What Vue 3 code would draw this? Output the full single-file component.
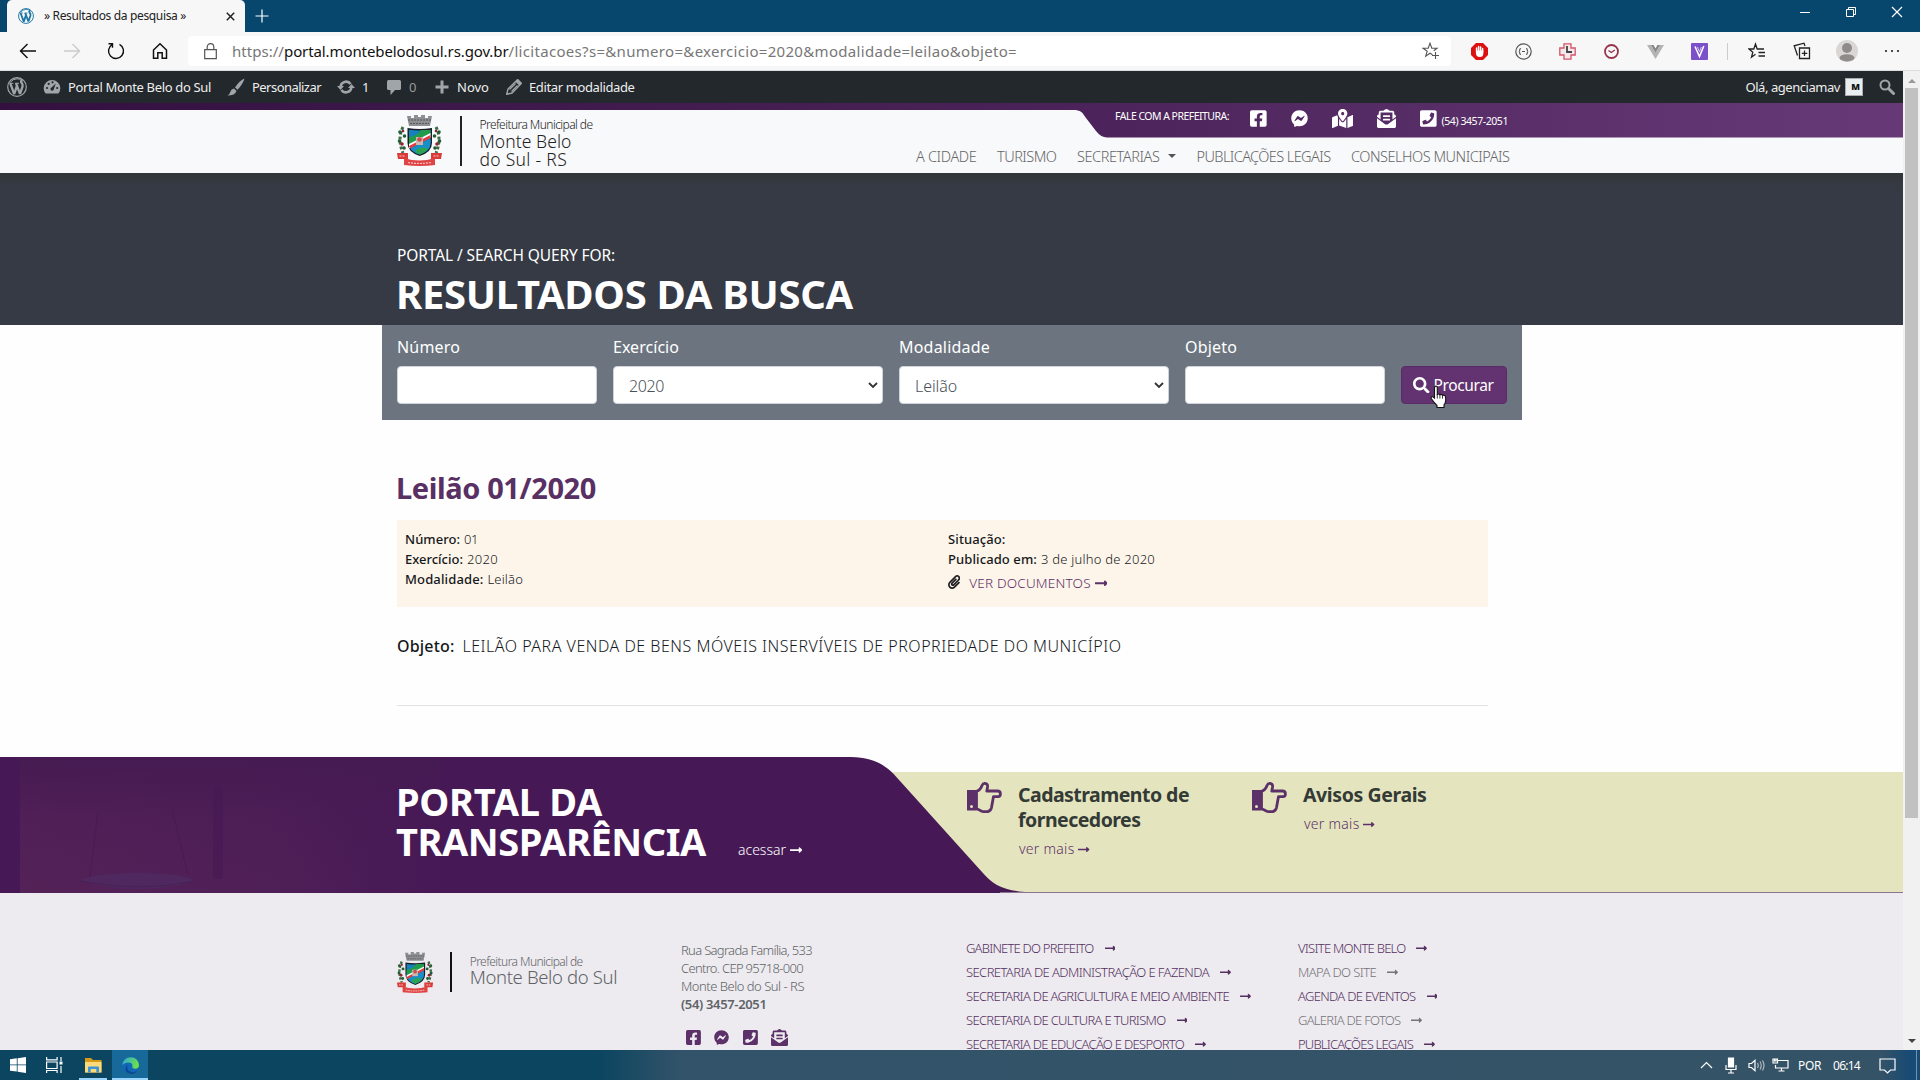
<script setup>
import { h } from 'vue'

// Tracks text so that its run takes the given width
const vFit = {
  mounted(el, { value }) {
    const range = document.createRange()
    range.selectNodeContents(el)
    const natural = range.getBoundingClientRect().width
    const count = el.textContent.trim().length
    if (count > 0) el.style.letterSpacing = ((value - natural) / count).toFixed(3) + 'px'
  },
}

const icons = {
  facebook: [448, 'M400 32H48A48 48 0 0 0 0 80v352a48 48 0 0 0 48 48h137.25V327.69h-63V256h63v-54.64c0-62.15 37-96.48 93.67-96.48 27.14 0 55.52 4.84 55.52 4.84v61h-31.27c-30.81 0-40.42 19.12-40.42 38.73V256h68.78l-11 71.69h-57.78V480H400a48 48 0 0 0 48-48V80a48 48 0 0 0-48-48z'],
  messenger: [512, 'M256.55 8C116.52 8 8 110.34 8 248.57c0 72.3 29.71 134.78 78.07 177.94 8.35 7.51 6.63 11.86 8.05 58.23A19.92 19.92 0 0 0 122 502.31c52.91-23.3 53.59-25.14 62.56-22.7C337.85 521.8 504 423.7 504 248.57 504 110.34 396.59 8 256.55 8zm149.24 185.13l-73 115.57a37.37 37.37 0 0 1-53.91 9.93l-58.08-43.47a15 15 0 0 0-18 0l-78.37 59.44c-10.46 7.93-24.16-4.6-17.11-15.67l73-115.57a37.36 37.36 0 0 1 53.91-9.93l58.06 43.46a15 15 0 0 0 18 0l78.41-59.38c10.44-7.98 24.14 4.54 17.09 15.62z'],
  map: [576, 'M288 0c-69.59 0-126 56.41-126 126 0 56.26 82.35 158.8 113.9 196.02 6.39 7.54 17.82 7.54 24.2 0C331.65 284.8 414 182.26 414 126 414 56.41 357.59 0 288 0zm0 168c-23.2 0-42-18.8-42-42s18.8-42 42-42 42 18.8 42 42-18.8 42-42 42zM20.12 215.95A32.006 32.006 0 0 0 0 245.66v250.32c0 11.32 11.43 19.06 21.94 14.86L160 448V214.92c-8.84-15.98-16.07-31.54-21.25-46.42L20.12 215.95zM288 359.67c-14.07 0-27.38-6.18-36.51-16.96-19.66-23.2-40.57-49.62-59.49-76.72v182l192 64V266c-18.92 27.09-39.82 53.52-59.49 76.72-9.13 10.77-22.44 16.95-36.51 16.95zm266.06-198.51L416 224v288l139.88-55.95A31.996 31.996 0 0 0 576 426.34V176.02c0-11.32-11.43-19.06-21.94-14.86z'],
  mail: [512, 'M176 216h160c8.84 0 16-7.16 16-16v-16c0-8.84-7.16-16-16-16H176c-8.84 0-16 7.16-16 16v16c0 8.84 7.16 16 16 16zm-16 80c0 8.84 7.16 16 16 16h160c8.84 0 16-7.16 16-16v-16c0-8.84-7.16-16-16-16H176c-8.84 0-16 7.16-16 16v16zm96 121.13c-16.42 0-32.84-5.06-46.86-15.19L0 250.86V464c0 26.51 21.49 48 48 48h416c26.51 0 48-21.49 48-48V250.86L302.86 401.94c-14.02 10.12-30.44 15.19-46.86 15.19zm237.61-254.18c-8.85-6.94-17.24-13.47-29.61-22.81V96c0-26.51-21.49-48-48-48h-77.55c-3.04-2.2-5.87-4.26-9.04-6.56C312.6 29.17 279.2-.35 256 0c-23.2-.35-56.59 29.17-73.41 41.44-3.17 2.3-6 4.36-9.04 6.56H96c-26.51 0-48 21.49-48 48v44.14c-12.37 9.33-20.76 15.87-29.61 22.81A47.995 47.995 0 0 0 0 200.72v10.65l96 69.35V96h320v184.72l96-69.35v-10.65c0-14.74-6.78-28.67-18.39-37.77z'],
  phone: [448, 'M400 32H48C21.49 32 0 53.49 0 80v352c0 26.51 21.49 48 48 48h352c26.51 0 48-21.49 48-48V80c0-26.51-21.49-48-48-48zM94 416c-7.033 0-13.057-4.873-14.616-11.627l-14.998-65a15 15 0 0 1 8.707-17.16l69.998-29.999a15 15 0 0 1 17.518 4.289l30.997 37.885c48.944-22.963 88.297-62.858 110.781-110.78l-37.886-30.997a15.001 15.001 0 0 1-4.289-17.518l30-69.998a15 15 0 0 1 17.16-8.707l65 14.998A14.997 14.997 0 0 1 384 126c0 160.292-129.945 290-290 290z'],
  search: [512, 'M505 442.7L405.3 343c-4.5-4.5-10.6-7-17-7H372c27.6-35.3 44-79.7 44-128C416 93.1 322.9 0 208 0S0 93.1 0 208s93.1 208 208 208c48.3 0 92.7-16.4 128-44v16.3c0 6.4 2.5 12.5 7 17l99.7 99.7c9.4 9.4 24.6 9.4 33.9 0l28.3-28.3c9.4-9.4 9.4-24.6.1-34zM208 336c-70.7 0-128-57.2-128-128 0-70.7 57.2-128 128-128 70.7 0 128 57.2 128 128 0 70.7-57.2 128-128 128z'],
  clip: [448, 'M43.246 466.142c-58.43-60.289-57.341-157.511 1.386-217.581L254.392 34c44.316-45.332 116.351-45.336 160.671 0 43.89 44.894 43.943 117.329 0 162.276L232.214 383.128c-29.855 30.537-78.633 30.111-107.982-.998-28.275-29.97-27.368-77.473 1.452-106.953l143.743-146.835c6.182-6.314 16.312-6.422 22.626-.241l22.861 22.379c6.315 6.182 6.422 16.312.241 22.626L171.427 319.927c-4.932 5.045-5.236 13.428-.648 18.292 4.372 4.634 11.245 4.711 15.688.165l182.849-186.851c19.613-20.062 19.613-52.725-.011-72.798-19.189-19.627-49.957-19.637-69.154 0L90.39 293.295c-34.763 35.56-35.299 93.12-1.191 128.313 34.01 35.093 88.985 35.137 123.058.286l172.06-175.999c6.177-6.319 16.307-6.433 22.626-.256l22.877 22.364c6.319 6.177 6.434 16.307.256 22.626l-172.06 175.998c-59.576 60.938-155.943 60.216-214.77-.485z'],
  arrow: [448, 'M320 224H12c-7 0-12 5-12 12v40c0 7 5 12 12 12h308v44c0 22 26 32 41 17l80-76c9-9 9-25 0-34l-80-76c-15-15-41-4-41 17z'],
}

const Icon = ({ name, size }) =>
  h('svg', { viewBox: `0 0 ${icons[name][0]} 512`, height: size, width: (size * icons[name][0]) / 512, fill: 'currentColor', class: 'ic' }, [h('path', { d: icons[name][1] })])
Icon.props = ['name', 'size']

const WpLogo = ({ size }) =>
  h('svg', { viewBox: '0 0 20 20', width: size, height: size, class: 'ic' }, [
    h('circle', { cx: 10, cy: 10, r: 9.3, fill: 'none', stroke: 'currentColor', 'stroke-width': 1.2 }),
    h('path', { fill: 'none', stroke: 'currentColor', 'stroke-width': 2.3, 'stroke-linejoin': 'bevel', d: 'M3.2 6.2 7.2 17 10.2 8.2' }),
    h('path', { fill: 'none', stroke: 'currentColor', 'stroke-width': 2.3, 'stroke-linejoin': 'bevel', d: 'M9 6.2 13 16.8 15.6 9.4Q16 7.6 14.6 5.8T15.2 3.2' }),
    h('path', { fill: 'none', stroke: 'currentColor', 'stroke-width': 1, d: 'M2.6 6.3H6.3M8 6.3H12M3.2 5.4Q6 1.8 10 1.8T15.4 3.6' }),
  ])
WpLogo.props = ['size']

const Crest = ({ height }) =>
  h('svg', { viewBox: '0 0 45 51', height, width: (height * 45) / 51, class: 'ic', innerHTML: `
    <path d="M10 1h4v2h3V0h4v2h3V0h4v3h3V1h4l-2 10H12z" fill="#8d8f92"/>
    <path d="M11 5h24M13 8.500h19" stroke="#55585b" stroke-width="1" stroke-dasharray="2 1"/>
    <path d="M6 12q-6 12 0 26M39 12q6 12 0 26" stroke="#3e6b43" stroke-width="3" fill="none" stroke-dasharray="3 2"/>
    <g fill="#235b36"><circle cx="3" cy="17" r="1.800"/><circle cx="7.500" cy="21" r="1.800"/><circle cx="2.500" cy="26" r="1.800"/><circle cx="7" cy="33" r="1.800"/><circle cx="42" cy="17" r="1.800"/><circle cx="37.500" cy="21" r="1.800"/><circle cx="42.500" cy="26" r="1.800"/><circle cx="38" cy="33" r="1.800"/></g>
    <g fill="#8c2634"><circle cx="5" cy="29" r="1.800"/><circle cx="40" cy="29" r="1.800"/><circle cx="6" cy="16" r="1.300"/><circle cx="39" cy="16" r="1.300"/></g>
    <path d="M0 38h11v6H1zM34 38h11l-1 6H34z" fill="#d93a3a"/>
    <path d="M7 43q15 5 31 0v7q-15 2-31 0z" fill="#e04444"/>
    <path d="M2.500 41h6M36.500 41h6M11 47.500q11 2 23 0" stroke="#f6c9c4" stroke-width="1.200" stroke-dasharray="2 1" fill="none"/>
    <path d="M10.500 13q12 2 24.500 0v15q0 9-12.250 13Q10.500 37 10.500 28z" fill="#191f24"/>
    <path d="M12 14.800q10.500 1.500 21.500 0V28q0 8-10.750 11.500Q12 36 12 28z" fill="#1681bd"/>
    <path d="M12 22q8-1 12-7h9.500v7L12 31z" fill="#239b4c"/>
    <path d="M12 29 33.500 18v4.500L12 33.500z" fill="#fff"/>
    <path d="M12 31 33.500 20v3L13 33.500z" fill="#e23b3c"/>
    <path d="M13.500 33.500 33.500 24v4q0 8-10.750 11.500Q16 37.500 13.500 33.500z" fill="#1a8fc7"/>
    <path d="M18 36q6-6 13-2-3 4-8.250 5.500Q20 38.500 18 36z" fill="#2aa450"/>
    <path d="M19 22h7v8h-7z" fill="#c9b9b2"/><circle cx="22.500" cy="24.500" r="2.300" fill="#d34a4b"/>` })
Crest.props = ['height']

const exts = ['adblock', 'json', 'cross', 'check', 'vue', 'vuetify']
const menu = [['A CIDADE', 60.5], ['TURISMO', 59.5], ['SECRETARIAS', 82.5], ['PUBLICAÇÕES LEGAIS', 134], ['CONSELHOS MUNICIPAIS', 158.5]]
const offices = [['GABINETE DO PREFEITO', 127.5], ['SECRETARIA DE ADMINISTRAÇÃO E FAZENDA', 243], ['SECRETARIA DE AGRICULTURA E MEIO AMBIENTE', 263], ['SECRETARIA DE CULTURA E TURISMO', 199.5], ['SECRETARIA DE EDUCAÇÃO E DESPORTO', 218]]
const links = [['VISITE MONTE BELO', 107.5], ['MAPA DO SITE', 78, true], ['AGENDA DE EVENTOS', 117.5], ['GALERIA DE FOTOS', 102.5, true], ['PUBLICAÇÕES LEGAIS', 115]]
const address = [['Rua Sagrada Família, 533', 131], ['Centro. CEP 95718-000', 122], ['Monte Belo do Sul - RS', 123]]
</script>

<template>
  <div class="screen">
    <!-- Browser window frame -->
    <div class="titlebar">
      <div class="tab">
        <span class="fav"><WpLogo :size="16" /></span>
        <span class="tabname" v-fit="142">» Resultados da pesquisa »</span>
        <svg width="9" height="9" viewBox="0 0 9 9" stroke="#222" stroke-width="1.500"><path d="M.8.8l7.400 7.400M8.200.8.800 8.200" /></svg>
      </div>
      <svg class="newtab" width="14" height="14" viewBox="0 0 14 14" stroke="#fff" stroke-width="1.200"><path d="M7 .500v13M.500 7h13" /></svg>
      <div class="winbtns">
        <svg width="12" height="12" viewBox="0 0 12 12" stroke="#fff" fill="none"><path d="M1 6.500h10" /></svg>
        <svg width="12" height="12" viewBox="0 0 12 12" stroke="#fff" fill="none"><path d="M1.500 3.500h7v7h-7zM3.500 3.500v-2h7v7h-2" /></svg>
        <svg width="12" height="12" viewBox="0 0 12 12" stroke="#fff" fill="none" stroke-width="1.200"><path d="M1 1l10 10M11 1 1 11" /></svg>
      </div>
    </div>
    <div class="toolbar">
      <div class="navs">
        <svg width="18" height="18" viewBox="0 0 18 18"><path d="M17 9H1.500M8.500 2l-7 7 7 7" /></svg>
        <svg width="18" height="18" viewBox="0 0 18 18" class="off"><path d="M1 9h15.500M9.500 2l7 7-7 7" /></svg>
        <svg width="18" height="18" viewBox="0 0 18 18"><path d="M12.500 2.300a7.500 7.500 0 1 1-7.500.3M1.500 1.700h4v4" /></svg>
        <svg width="18" height="18" viewBox="0 0 18 18"><path d="M2.500 16.300V8L9 1.800 15.500 8v8.300h-4.300v-5.600H6.800v5.600z" stroke-width="1.500" /></svg>
      </div>
      <div class="address">
        <svg width="13" height="17" viewBox="0 0 13 17" fill="none" stroke="#555" stroke-width="1.200"><path d="M.7 6.700h11.600v9H.7zM3.200 6.700V4a3.300 3.300 0 0 1 6.600 0v2.700" /></svg>
        <span class="url"><span v-fit="52">https://</span><b v-fit="224.500">portal.montebelodosul.rs.gov.br</b><span v-fit="508.500">/licitacoes?s=&amp;numero=&amp;exercicio=2020&amp;modalidade=leilao&amp;objeto=</span></span>
        <svg width="18" height="18" viewBox="0 0 18 18" fill="none" stroke="#555" stroke-width="1.100"><path d="M10.500 12.700 8 11.200l-4.300 3 1.500-5L1 6.200h5.200L8 1.200l1.800 5H15l-3.300 2.500M13.500 10v7M10 13.500h7" /></svg>
      </div>
      <div class="exts">
        <span v-for="e in exts" :key="e" class="cell">
          <svg v-if="e === 'adblock'" width="17" height="17" viewBox="0 0 17 17"><path d="M5 0h7l5 5v7l-5 5H5l-5-5V5z" fill="#dc1010" /><path d="M5.600 9V5M7.600 8V3.500M9.600 8V4M11.600 9V5.500" stroke="#fff" stroke-width="1.500" stroke-linecap="round" /><path d="M4.900 7.500h7.400v3q0 3.500-3.500 3.500t-3.900-3.500z" fill="#fff" /></svg>
          <svg v-else-if="e === 'json'" width="17" height="17" viewBox="0 0 17 17" fill="none" stroke="#555" stroke-width="1.200"><circle cx="8.500" cy="8.500" r="7.700" /><path d="M6 5.500q-1.300 0-1.300 1.500T3.800 8.500q.9 0 .9 1.500T6 11.500M11 5.500q1.300 0 1.300 1.500t.9 1.500q-.9 0-.9 1.500T11 11.500M7 8.500h3" /></svg>
          <svg v-else-if="e === 'cross'" width="17" height="17" viewBox="0 0 17 17"><path d="M5 .8h7V5h4.200v7H12v4.200H5V12H.8V5H5z" fill="#f4e9ec" stroke="#d55468" stroke-width="1.300" /><path d="M8 3v6h5" stroke="#444" stroke-width="1.800" fill="none" /></svg>
          <svg v-else-if="e === 'check'" width="17" height="17" viewBox="0 0 17 17" fill="none" stroke="#96344e" stroke-width="1.800"><circle cx="8.500" cy="8.500" r="6.500" /><path d="M5.500 7.500 8.300 9.500l3.500-2.500" stroke-width="1.400" /></svg>
          <svg v-else-if="e === 'vue'" width="17" height="17" viewBox="0 0 17 17"><path d="M0 2h4l4.500 7.500L13 2h4L8.500 16z" fill="#b3b3b3" /><path d="M4 2h2.500l2 3.500 2-3.500H13L8.500 9.500z" fill="#858585" /></svg>
          <svg v-else width="17" height="17" viewBox="0 0 17 17"><rect width="17" height="17" rx="1" fill="#7b50c8" /><path d="M4 3.500l4.500 10L12.800 3" fill="none" stroke="#fff" stroke-width="1.500" /><path d="M6.500 4l2 5 1.800-5" fill="none" stroke="#d5c4f3" /></svg>
        </span>
      </div>
      <div class="sep"></div>
      <div class="tools">
        <span class="cell"><svg width="18" height="18" viewBox="0 0 18 18" fill="none" stroke="#222" stroke-width="1.300"><path d="M7.500 12.300l-4 2.900 1.300-5L1 7h4.800l1.700-5 1.700 5H16M10.500 10.500H17M10.500 14H17" /></svg></span>
        <span class="cell"><svg width="18" height="18" viewBox="0 0 18 18" fill="none" stroke="#222" stroke-width="1.300"><path d="M6.500 6h10v10.500h-10zM11.500 8.500V14M8.800 11.300h5.500M4.500 13.500 1.200 3.800 11 1.200 12 4" /></svg></span>
        <span class="cell"><svg width="22" height="22" viewBox="0 0 22 22"><circle cx="11" cy="11" r="11" fill="#d9d6d4" /><circle cx="11" cy="8" r="5" fill="#8e8b8a" /><ellipse cx="11" cy="17.800" rx="7.500" ry="3.600" fill="#8e8b8a" /></svg></span>
        <span class="cell"><svg width="16" height="4" viewBox="0 0 16 4" fill="#222"><circle cx="2" cy="2" r="1.100" /><circle cx="8" cy="2" r="1.100" /><circle cx="14" cy="2" r="1.100" /></svg></span>
      </div>
    </div>

    <div class="viewport">
      <div class="page">
        <div class="adminbar">
          <span class="a-wp"><WpLogo :size="20" /></span>
          <span class="a-item dash"><svg width="18" height="18" viewBox="0 0 18 18"><path d="M2.500 15.500a8.300 8.300 0 1 1 13 0z" fill="currentColor" /><g fill="#23282d"><circle cx="4" cy="10" r="1.100" /><circle cx="5.700" cy="5.900" r="1.100" /><circle cx="9.500" cy="4.300" r="1.100" /><circle cx="14.200" cy="10" r="1.100" /><path d="M12.800 5.500 10.500 12a1.700 1.700 0 0 1-3-1.500z" /></g></svg><b v-fit="143">Portal Monte Belo do Sul</b></span>
          <span class="a-item brush"><svg width="18" height="18" viewBox="0 0 18 18" fill="currentColor"><path d="M17.500.5Q13 2 8 9.500l2.500 2.300Q16 6 17.500.500zM7 10.500 9.500 13Q8 17.500.500 17.500 3 16 3.500 13.500T7 10.500z" /></svg><b v-fit="69">Personalizar</b></span>
          <span class="a-item sync"><svg width="18" height="16" viewBox="0 0 18 16" fill="none" stroke="currentColor" stroke-width="2.600"><path d="M3.600 8a5.500 5.500 0 0 1 10-3M14.400 8a5.500 5.500 0 0 1-10 3" /><path d="M0 7h7L3.500 11zM18 9h-7l3.500-4z" fill="currentColor" stroke="none" /></svg><b v-fit="7">1</b></span>
          <span class="a-item talk"><svg width="14" height="15" viewBox="0 0 14 15" fill="currentColor"><path d="M1.500 0h11Q14 0 14 1.500v7Q14 10 12.500 10H8l-4.500 5v-5h-2Q0 10 0 8.500v-7Q0 0 1.500 0z" /></svg><b v-fit="7">0</b></span>
          <span class="a-item plus"><svg width="14" height="14" viewBox="0 0 14 14" stroke="currentColor" stroke-width="3"><path d="M7 .500v13M.500 7h13" /></svg><b v-fit="32">Novo</b></span>
          <span class="a-item pen"><svg width="16" height="16" viewBox="0 0 16 16"><path d="M11.500.700l3.800 3.800L6 14 .7 15.300 2 10z" fill="none" stroke="currentColor" stroke-width="1.400" /><path d="M12 1l3 3-1.700 1.700-3-3zM3.500 10.500l6-6M5.500 12.500l6-6" fill="currentColor" stroke="currentColor" stroke-width="1.300" /></svg><b v-fit="105.500">Editar modalidade</b></span>
          <span class="a-user"><b v-fit="94.500">Olá, agenciamav</b><i class="ava">M</i><svg width="16" height="16" viewBox="0 0 16 16" fill="none" stroke="#a0a5aa"><circle cx="6" cy="6" r="4.500" stroke-width="2" /><path d="M9.500 9.500l5 5" stroke-width="3" stroke-linecap="round" /></svg></span>
        </div>

        <header class="header">
          <svg class="headshape" width="830" height="35" viewBox="0 0 830 35"><path d="M0 7C8 7 9 9 13 15L23 28Q28 34.500 34 34.500H830V0H0z" fill="url(#hg)" /><defs><linearGradient id="hg"><stop offset="0" stop-color="#4b235a" /><stop offset="1" stop-color="#673a77" /></linearGradient></defs></svg>
          <div class="brand">
            <Crest :height="51" />
            <div class="rule"></div>
            <div class="names"><small v-fit="113">Prefeitura Municipal de</small><span v-fit="92">Monte Belo</span><span v-fit="87.500">do Sul - RS</span></div>
          </div>
          <div class="headright">
            <div class="contact">
              <b class="fale" v-fit="114">FALE COM A PREFEITURA:</b>
              <Icon name="facebook" :size="19" class="c1" /><Icon name="messenger" :size="17" class="c2" /><Icon name="map" :size="19" class="c3" /><Icon name="mail" :size="19" class="c4" /><Icon name="phone" :size="19" class="c5" />
              <b class="tel" v-fit="66.500">(54) 3457-2051</b>
            </div>
            <nav class="menu"><span v-for="(m, i) in menu" :key="m[0]" class="mi"><span v-fit="m[1]">{{ m[0] }}</span><i v-if="i === 2" class="caret"></i></span></nav>
          </div>
        </header>

        <section class="hero">
          <div class="crumb"><span v-fit="218">PORTAL / SEARCH QUERY FOR:</span></div>
          <h1><span v-fit="457">RESULTADOS DA BUSCA</span></h1>
        </section>

        <form class="search">
          <label class="f1"><span v-fit="63">Número</span><input /></label>
          <label class="f2"><span v-fit="66">Exercício</span><div class="sel"><span v-fit="35">2020</span><svg width="10" height="7" viewBox="0 0 10 7"><path d="M1 1l4 4 4-4" /></svg></div></label>
          <label class="f2"><span v-fit="91">Modalidade</span><div class="sel"><span v-fit="42">Leilão</span><svg width="10" height="7" viewBox="0 0 10 7"><path d="M1 1l4 4 4-4" /></svg></div></label>
          <label class="f1"><span v-fit="52">Objeto</span><input /></label>
          <button type="button"><Icon name="search" :size="16.500" /><span v-fit="60">Procurar</span>
            <svg class="cursor" width="18" height="24" viewBox="0 0 18 24"><path d="M5 1.500q1.800-1 2.300 1V9.500q1.600-1.200 2.600.3 1.700-1 2.600.6 2.200-.8 2.900 1.200.5 1.400.3 4-.2 2.500-1.700 4.200V22.500H7V20.500Q4 17.500 1.200 13.500q-.5-2 1.500-1.800l1.800 1.500V2.300z" fill="#fff" stroke="#111" stroke-width="1.100" /><path d="M7.300 9.500v4M9.900 10v3.500M12.500 10.700v3" stroke="#111" stroke-width=".8" /></svg>
          </button>
        </form>

        <main class="result">
          <h2><span v-fit="200">Leilão 01/2020</span></h2>
          <div class="box">
            <div class="col"><p><b v-fit="55">Número:</b><span v-fit="14">01</span></p><p><b v-fit="58">Exercício:</b><span v-fit="31">2020</span></p><p><b v-fit="78.500">Modalidade:</b><span v-fit="35.500">Leilão</span></p></div>
            <div class="col"><p><b v-fit="57.500">Situação:</b></p><p><b v-fit="89">Publicado em:</b><span v-fit="114">3 de julho de 2020</span></p><p class="docs"><Icon name="clip" :size="14" /><span v-fit="121.500">VER DOCUMENTOS</span><Icon name="arrow" :size="14.500" /></p></div>
          </div>
          <p class="objeto"><b v-fit="57.500">Objeto:</b><span v-fit="659">LEILÃO PARA VENDA DE BENS MÓVEIS INSERVÍVEIS DE PROPRIEDADE DO MUNICÍPIO</span></p>
          <hr />
        </main>

        <section class="band">
          <svg class="bandbg" width="1903" height="136" viewBox="0 0 1903 136">
            <defs>
              <linearGradient id="tx"><stop offset="0" stop-color="#542257" /><stop offset=".6" stop-color="#4f1f57" /><stop offset="1" stop-color="#461956" /></linearGradient>
              <linearGradient id="tv" x2="0" y2="1"><stop offset="0" stop-color="#461a52" /><stop offset=".45" stop-color="#461a54" stop-opacity=".3" /><stop offset="1" stop-color="#461a54" stop-opacity="0" /></linearGradient>
            </defs>
            <path d="M860 15H1903V135H860z" fill="#e4e5bf" />
            <path d="M0 0H845C872 0 884 5 900 24L982 115C996 131 1006 135 1045 136H0z" fill="#461956" />
            <path d="M20 0h420v136H20z" fill="url(#tx)" /><path d="M20 0h420v136H20z" fill="url(#tv)" />
            <path d="M80 124q57 16 115 0-10-8-58-8t-57 8z" fill="#4d2a62" opacity=".8" /><path d="M80 124q57 12 115 0M90 120l8-66M188 118l-16-66" fill="none" stroke="#3e184d" opacity=".5" />
            <path d="M213 30h10v92h-10z" fill="#431753" opacity=".5" />
            <path d="M1000 135.500h903" stroke="#8c7590" />
          </svg>
          <div class="transp"><h3><span v-fit="206">PORTAL DA</span><span v-fit="310">TRANSPARÊNCIA</span></h3><div class="go"><span v-fit="48">acessar</span><Icon name="arrow" :size="14" /></div></div>
          <div v-for="n in 2" :key="n" class="card">
            <svg width="35" height="31" viewBox="0 0 35 31"><path d="M9.500 9.300Q13.500 8 15 3.500 16 1.300 18 1.400q2.800.3 2.600 3.300L19.800 9H31q2.400.3 2.400 2.900T31 14.600h-4.500l-2 10.900q-.8 3.500-3.500 4-5 .8-8-1.200l-3.500-1.500z" fill="none" stroke="#5c3068" stroke-width="2.800" stroke-linejoin="round" /><path d="M0 8h9.500v20.500H0z" fill="#5c3068" /><circle cx="4.500" cy="24.500" r="1.500" fill="#e4e5bf" /></svg>
            <div class="txt"><h4 v-if="n === 1"><span v-fit="171">Cadastramento de</span><span v-fit="122.500">fornecedores</span></h4><h4 v-else><span v-fit="123.500">Avisos Gerais</span></h4><div class="go"><span v-fit="55.500">ver mais</span><Icon name="arrow" :size="13" /></div></div>
          </div>
        </section>

        <footer class="footer">
          <div class="fbrand"><Crest :height="41" /><div class="rule"></div><div class="names"><small v-fit="113">Prefeitura Municipal de</small><span v-fit="147.500">Monte Belo do Sul</span></div></div>
          <div class="faddr"><p v-for="a in address" :key="a[0]" v-fit="a[1]">{{ a[0] }}</p><p><b v-fit="85.500">(54) 3457-2051</b></p><div class="soc"><Icon name="facebook" :size="17" /><Icon name="messenger" :size="15" /><Icon name="phone" :size="17" /><Icon name="mail" :size="17" /></div></div>
          <ul class="l1"><li v-for="o in offices" :key="o[0]"><span v-fit="o[1]">{{ o[0] }}</span><Icon name="arrow" :size="12.500" /></li></ul>
          <ul><li v-for="l in links" :key="l[0]" :class="{ dim: l[2] }"><span v-fit="l[1]">{{ l[0] }}</span><Icon name="arrow" :size="12.500" /></li></ul>
        </footer>
      </div>
      <div class="scroll"><i class="up"></i><div class="thumb"></div><i class="down"></i></div>
    </div>

    <!-- Desktop taskbar -->
    <div class="taskbar">
      <span class="tb"><svg width="16" height="16" viewBox="0 0 16 16" fill="#fff"><path d="M0 2.300 6.800 1.300V7.500H0zM7.600 1.200 16 0v7.500H7.600zM0 8.300h6.800v6.300L0 13.700zM7.600 8.300H16V16L7.600 14.800z" /></svg></span>
      <span class="tb"><svg width="17" height="16" viewBox="0 0 17 16" fill="none" stroke="#fff" stroke-width="1.200"><path d="M.600 0v2.800h10.500V0M.600 5h10.500v6.500H.600zM.600 16v-2.500h10.500V16M15 0v4M15 9v7" /><path d="M13.500 4.500h3v3h-3z" fill="#fff" stroke="none" /></svg></span>
      <span class="tb open"><svg width="17" height="15" viewBox="0 0 17 15"><path d="M0 0h6l2 2h8.500v12.500H0z" fill="#d99a18" /><path d="M0 4h16.500v10.500H0z" fill="#fbdb79" /><path d="M3 14.500V9.500q0-1 1-1h9q1 0 1 1v5h-2.700V11H5.700v3.500z" fill="#3d94d6" /></svg></span>
      <span class="tb open on"><svg width="17" height="17" viewBox="0 0 17 17"><defs><linearGradient id="eg" x2="1" y2=".4"><stop offset="0" stop-color="#2aa5dc" /><stop offset="1" stop-color="#6be04d" /></linearGradient></defs><circle cx="8.500" cy="8.500" r="8.300" fill="#1267b8" /><path d="M.3 8Q1.500.2 8.700.2T17 8q0 3.700-3.700 3.700-3 0-3-1.700.8-3.500-2.300-4.200Q3.500 4.500.300 8z" fill="url(#eg)" /><path d="M6 7.500q-2.500 5.500 3.500 7.500 3 .7 6-1.500-2.500 4-7.500 3.300-5-1-4.500-5.500Q4 8.500 6 7.500z" fill="#0b4a91" /></svg></span>
      <div class="tray">
        <svg width="13" height="8" viewBox="0 0 13 8"><path d="M1 7l5.500-5.500L12 7" /></svg>
        <svg width="12" height="17" viewBox="0 0 12 17"><path d="M3.500 1h5v9h-5z" fill="#fff" /><path d="M1 8v4.500h10V8M6 12.500V16M3 16h6" /></svg>
        <svg width="17" height="13" viewBox="0 0 17 13"><path d="M1 4.500h2.500L7 1.300v10.400L3.500 8.500H1z" /><path d="M9.500 4q1.500 2.500 0 5M12 2.500q2.500 4 0 8M14.500 1.500q3 5 0 10" opacity=".6" /></svg>
        <svg width="17" height="14" viewBox="0 0 17 14"><path d="M5 2.500h11v7.500H3.500V7M9.500 10v3M6.500 13h6M1 1h4.500v4H1zM2.500 1v2h1.500V1" /></svg>
        <span class="por" v-fit="23">POR</span>
        <span class="clock" v-fit="27">06:14</span>
        <svg width="17" height="17" viewBox="0 0 17 17"><path d="M1 2h15v11h-4.500l-3 3-3-3H1z" /></svg>
        <i class="peek"></i>
      </div>
    </div>
  </div>
</template>

<style>
body { margin: 0; overflow: hidden; }
.ic { display: block; flex: none; }
</style>

<style scoped>
.screen { width: 1920px; height: 1080px; overflow: hidden; display: flex; flex-direction: column; font-family: "Noto Sans", "Open Sans", sans-serif; font-weight: 300; color: #15181b; white-space: nowrap; }
.screen * { box-sizing: border-box; }
p, h1, h2, h3, h4, ul { margin: 0; padding: 0; list-style: none; }
i { font-style: normal; }
svg { display: block; flex: none; }
.titlebar { height: 32px; background: #07476d; display: flex; align-items: center; flex: none; }
.tab { margin-left: 7px; width: 238px; height: 32px; background: #f7f7f7; border-radius: 5px 5px 0 0; display: flex; align-items: center; padding: 0 10px 0 11px; }
.fav { color: #1b76a5; margin-right: 10px; }
.tabname { font-size: 12px; font-weight: 400; margin-right: auto; color: #222; margin-top: -1px; }
.newtab { margin-left: 10px; }
.winbtns { margin-left: auto; display: flex; gap: 34px; padding: 0 17px 9px 0; }
.toolbar { height: 39px; background: #f7f7f7; display: flex; align-items: center; flex: none; border-bottom: 1px solid #ddd; }
.navs { display: flex; gap: 26px; padding-left: 19px; width: 188px; }
.navs svg { fill: none; stroke: #111; stroke-width: 1.4; }
.navs .off { stroke: #ccc; }
.address { width: 1263px; height: 30px; background: #fff; border-radius: 4px; display: flex; align-items: center; padding: 0 11px 0 16px; }
.url { flex: 1; margin-left: 15px; display: flex; font-size: 15px; font-weight: 400; color: #777; }
.url b { font-weight: 400; color: #111; }
.exts { display: flex; margin-left: 6px; }
.cell { width: 44px; display: flex; justify-content: center; align-items: center; }
.sep { width: 1px; height: 17px; background: #ccc; margin: 0 7px 0 6px; }
.tools { display: flex; gap: 1px; }
.viewport { flex: 1; display: flex; min-height: 0; }
.page { width: 1903px; height: 979px; overflow: hidden; background: #fefefe; display: flex; flex-direction: column; }
.page > * { flex: none; }
.scroll { width: 17px; background: #f1f1f1; display: flex; flex-direction: column; align-items: center; padding: 8px 0 7px; }
.up, .down { border: 4px solid transparent; border-top: 0; border-bottom: 4px solid #999; }
.down { border-bottom: 0; border-top: 4px solid #444; margin-top: auto; }
.thumb { width: 13px; height: 730px; background: #c1c1c1; margin-top: 5px; }

.adminbar { height: 32px; background: #23282d; color: #a0a5aa; display: flex; align-items: center; padding-left: 7px; }
.adminbar b { font-size: 13px; font-weight: 400; color: #eee; }
.a-item { display: flex; align-items: center; gap: 7px; }
.a-wp { width: 36px; }
.dash { width: 184px; }
.brush { width: 110px; }
.sync { width: 50px; }
.talk { width: 48px; gap: 8px; }
.adminbar .talk b { color: #999; }
.plus { width: 71px; gap: 8px; }
.a-user { margin-left: auto; display: flex; align-items: center; padding-right: 8px; gap: 16px; }
.ava { width: 18px; height: 18px; background: #e9eef0; border: 1px solid #aaa; color: #111; font-size: 9px; font-weight: 900; line-height: 16px; text-align: right; padding-right: 2px; margin-left: -11px; }

.header { height: 70px; background: #f8f9fb; border-top: 7px solid; border-image: linear-gradient(90deg, #331040, #4b235a 1075px, #673a77) 7; display: flex; justify-content: space-between; padding: 0 397px; position: relative; z-index: 1; }
.headshape { position: absolute; right: 0; top: -7px; }
.brand { display: flex; padding-top: 5px; margin-left: 0; }
.brand .rule { width: 1.500px; height: 50px; background: #222; margin: 1px 18px 0 18px; }
.names { display: flex; flex-direction: column; color: #222; font-size: 17.500px; line-height: 18px; padding-top: 2px; align-items: flex-start; }
.names small { font-size: 12px; line-height: 15px; }
.headright { width: 593px; margin-right: -2px; display: flex; flex-direction: column; }
.contact { position: relative; display: flex; color: #fff; height: 30px; margin: -1px 0 0 200px; align-items: flex-start; font-size: 10.500px; line-height: 14px; }
.contact b { font-weight: 400; }
.fale { width: 135px; }
.c2 { margin: 1px 0 0 24px; }
.c3 { margin-left: 24px; }
.c4 { margin-left: 24px; }
.c5 { margin-left: 24px; }
.c1 { margin-left: 0; }
.contact .tel { margin: 5px 0 0 5px; }
.menu { display: flex; gap: 20.500px; font-size: 14.500px; line-height: 20px; color: #666; padding: 7px 0 0 1px; }
.menu .mi { display: flex; align-items: center; }
.caret { border: 4.500px solid transparent; border-top-color: #555; border-bottom: 0; margin-left: 8.500px; }

.hero { height: 152px; background: linear-gradient(#323638, #353a45 14px); color: #fff; padding: 70px 397px 0; }
.crumb { font-size: 15.500px; line-height: 24px; font-weight: 400; }
h1 { font-size: 40px; line-height: 48px; font-weight: 700; margin-top: 3px; margin-left: -1px; }

.search { margin-left: 382px; width: 1140px; height: 95px; background: #6c757f; padding: 10px 15px 0; display: flex; gap: 16px; color: #fff; }
label { display: flex; flex-direction: column; font-size: 16px; font-weight: 400; line-height: 24px; align-items: flex-start; }
.f1 { width: 200px; }
.f2 { width: 270px; }
input, .sel { width: 100%; height: 38px; margin-top: 7px; border: 1px solid #ced4da; border-radius: 4px; background: #fff; }
.sel { display: flex; justify-content: space-between; align-items: center; padding: 1px 4px 0 15px; color: #495057; font-weight: 300; }
.sel svg { fill: none; stroke: #333; stroke-width: 1.8; }
button { position: relative; width: 106px; height: 38px; margin-top: 31px; padding: 0 0 0 11px; border: 1px solid #5a2c67; border-radius: 4px; background: #623370; color: #fff; font: 400 15.500px "Noto Sans", sans-serif; display: flex; align-items: center; gap: 4px; white-space: nowrap; }
.cursor { position: absolute; left: 28px; top: 18px; }

.result { padding: 48px 0 0 397px; height: 337px; width: 1488px; }
h2 { color: #583063; font-size: 29px; line-height: 40px; font-weight: 700; margin-left: -1px; }
.box { height: 87px; margin-top: 12px; background: #fef5ea; padding: 9px 8px; display: flex; font-size: 13px; line-height: 20px; }
.col { width: 543px; flex: none; }
.col p { display: flex; gap: 4px; }
.col b, .objeto b { font-weight: 500; }
.col .docs { align-items: center; gap: 0; margin-top: 4px; color: #5c3068; font-size: 13.500px; }
.docs span { margin: 0 4px 0 9px; }
.docs svg:first-child { color: #222; margin-top: -3px; }
.objeto { display: flex; gap: 8px; font-size: 16px; line-height: 24px; margin-top: 27px; }
hr { border: 0; border-top: 1px solid #e3e3e3; margin: 47px 0 0; }

.band { height: 136px; position: relative; display: flex; padding-left: 397px; }
.bandbg { position: absolute; left: 0; top: 0; }
.transp, .card { position: relative; display: flex; }
.transp { width: 569px; color: #fff; padding-top: 24px; }
h3 { font-size: 38px; line-height: 40px; font-weight: 700; display: flex; flex-direction: column; width: 342px; margin-left: -1px; align-items: flex-start; }
.go { display: flex; align-items: center; gap: 4px; font-size: 14px; line-height: 20px; }
.transp .go { align-self: flex-start; padding-top: 59px; }
.card { width: 285px; padding-top: 25px; left: 1px; }
.card .txt { margin: 0 0 0 16px; }
h4 { font-size: 19.500px; line-height: 25px; font-weight: 700; color: #343a35; display: flex; flex-direction: column; align-items: flex-start; }
.card .go { color: #5c3068; margin: 7px 0 0 1px; }

.footer { height: 157px; overflow: hidden; background: #edebef; display: flex; padding: 0 0 0 397px; color: #5f6368; }
.fbrand { display: flex; width: 284px; padding-top: 59px; }
.fbrand .rule { width: 1.500px; height: 40px; background: #111; margin: 0 18px 0 17px; }
.fbrand .names { color: #5f6368; font-size: 18.500px; line-height: 18px; padding-top: 3px; }
.fbrand .names small { line-height: 13px; }
.faddr { width: 285px; padding-top: 48px; font-size: 13px; line-height: 18px; }
.faddr b { font-weight: 600; }
.soc { display: flex; gap: 13.500px; color: #5c3068; padding: 16px 0 0 5px; align-items: center; }
.footer ul { padding-top: 43px; width: 332px; font-size: 13px; line-height: 24px; color: #553061; }
.footer li { height: 24px; display: flex; align-items: center; gap: 11px; }
.footer .dim { color: #75737b; }

.taskbar { height: 30px; flex: none; display: flex; background: linear-gradient(90deg, #0c4560 600px, #32536a 680px, #355366 1880px, #174a75 1910px); color: #fff; }
.tb { width: 36px; display: flex; justify-content: center; align-items: center; }
.open { border-bottom: 2px solid #9bd5fb; padding-top: 2px; }
.tb.open:nth-child(3) { width: 28px; margin: 0 5px 0 7px; }
.on { background: #17699a; }
.tray { margin-left: auto; display: flex; align-items: center; font-size: 12px; font-weight: 400; }
.tray svg { fill: none; stroke: #fff; stroke-width: 1.2; margin-right: 11px; }
.tray svg:nth-child(1) { margin-right: 12px; }
.tray svg:nth-child(3) { margin-right: 7px; }
.tray svg:nth-child(4) { margin-right: 9px; }
.por { margin-right: 12px; }
.clock { margin-right: 19px; }
.tray svg:nth-last-child(2) { margin-right: 20px; }
.peek { width: 4px; height: 30px; border-left: 1px solid #6f93ab; }
</style>
